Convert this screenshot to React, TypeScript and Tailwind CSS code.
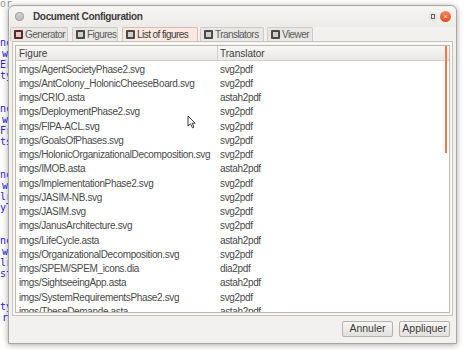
import React from 'react';

const rows: [string, string][] = [
  ['imgs/AgentSocietyPhase2.svg', 'svg2pdf'],
  ['imgs/AntColony_HolonicCheeseBoard.svg', 'svg2pdf'],
  ['imgs/CRIO.asta', 'astah2pdf'],
  ['imgs/DeploymentPhase2.svg', 'svg2pdf'],
  ['imgs/FIPA-ACL.svg', 'svg2pdf'],
  ['imgs/GoalsOfPhases.svg', 'svg2pdf'],
  ['imgs/HolonicOrganizationalDecomposition.svg', 'svg2pdf'],
  ['imgs/IMOB.asta', 'astah2pdf'],
  ['imgs/ImplementationPhase2.svg', 'svg2pdf'],
  ['imgs/JASIM-NB.svg', 'svg2pdf'],
  ['imgs/JASIM.svg', 'svg2pdf'],
  ['imgs/JanusArchitecture.svg', 'svg2pdf'],
  ['imgs/LifeCycle.asta', 'astah2pdf'],
  ['imgs/OrganizationalDecomposition.svg', 'svg2pdf'],
  ['imgs/SPEM/SPEM_icons.dia', 'dia2pdf'],
  ['imgs/SightseeingApp.asta', 'astah2pdf'],
  ['imgs/SystemRequirementsPhase2.svg', 'svg2pdf'],
  ['imgs/TheseDemande.asta', 'astah2pdf'],
];

const codeBits = [
  ['nc', 'w', 'Er', 'ty'],
  ['nc', 'w', 'Fr', 'ts'],
  ['nc', 'w', 'lr', 'yT'],
  ['nc', 'w', 'lr', 'st'],
  ['ty', 'rr'],
];

const TabIcon = ({ red }: { red?: boolean }) => (
  <span
    className={`mr-[2px] inline-flex h-[9px] w-[9px] shrink-0 items-center justify-center rounded-[1px] ${
      red ? 'bg-[#5b2b28]' : 'bg-[#4a4a48]'
    }`}
  >
    <span className={`h-[5px] w-[5px] ${red ? 'bg-[#e6c9c2]' : 'bg-[#cfcfcc]'}`} />
  </span>
);

const tabs = [
  { label: 'Generator', cls: 'w-[58px] mr-[4px]', red: true },
  { label: 'Figures', cls: 'w-[46px] mr-[4px]' },
  { label: 'List of figures', cls: 'w-[76px] mr-[2px]', active: true },
  { label: 'Translators', cls: 'w-[64px] mr-[3px]' },
  { label: 'Viewer', cls: 'w-[46px]' },
];

export default function App() {
  return (
    <div
      className="relative h-[350px] w-[465px] overflow-hidden bg-white"
      style={{ fontFamily: '"Liberation Sans", Arial, sans-serif' }}
    >
      {/* editor text behind the dialog */}
      <div className="text-[10px] leading-[11px]" style={{ fontFamily: '"DejaVu Sans Mono", monospace' }}>
        <div className="-mt-[2px] text-[#8a8a8a]">or</div>
        <div className="h-[28px]" />
        {codeBits.map((group, i) => (
          <div key={i} className="mb-[22px] text-[#1d23e0]">
            {group.map((t, j) => (
              <div key={j} className={j === 1 ? 'pl-[2px]' : ''}>{t}</div>
            ))}
          </div>
        ))}
      </div>

      {/* dialog window */}
      <div className="absolute left-[8px] top-[5px] flex h-[339px] w-[449px] flex-col rounded-t-[6px] border border-[#a9a6a1] bg-[#f2f1f0] shadow-[0_1px_6px_rgba(0,0,0,0.35)]">
        {/* title bar */}
        <div className="flex h-[21px] items-center rounded-t-[6px] bg-gradient-to-b from-[#f7f6f5] to-[#edebe9] pl-[6px] pr-[5px]">
          <span className="h-[9px] w-[9px] rounded-full bg-gradient-to-b from-[#d6d4d0] to-[#b9b6b1] shadow-[inset_0_0_0_1px_#aaa7a2]" />
          <span className="ml-[9px] whitespace-nowrap text-[10px] font-bold tracking-[-0.35px] text-[#3c3c3c]">
            Document Configuration
          </span>
          <div className="ml-auto flex items-center gap-[2px]">
            <span className="flex h-[10px] w-[10px] items-center justify-center rounded-full bg-[#e8e6e3]">
              <span className="h-[5px] w-[4px] border border-[#6a6864]" />
            </span>
            <span className="flex h-[11px] w-[11px] items-center justify-center rounded-full bg-gradient-to-b from-[#f48a5a] to-[#df4a1c] text-[8px] leading-none text-[#fbe0d3]">
              ×
            </span>
          </div>
        </div>

        {/* tabs */}
        <div className="flex h-[14px] items-end pl-[1px]">
          {tabs.map((t) => (
            <div
              key={t.label}
              className={`flex h-[14px] shrink-0 items-center overflow-hidden whitespace-nowrap rounded-t-[2px] border border-b-0 pl-[3px] text-[10px] leading-none ${t.cls} ${
                t.active
                  ? 'border-[#d9bcb2] bg-[#fbe8e1] text-[#3c3c3c]'
                  : 'border-[#cfccc7] bg-[#e9e7e4] text-[#5c5c5c]'
              }`}
            >
              <TabIcon red={t.red} />
              <span className="tracking-[-0.55px]">{t.label}</span>
            </div>
          ))}
        </div>

        {/* notebook page */}
        <div className="mx-[3px] flex h-[275px] flex-col border border-[#c6c3be] bg-[#f7f7f6] px-[2px] pt-[3px] pb-[2px]">
          <div className="relative flex flex-1 flex-col overflow-hidden border border-[#bcb9b4] bg-white">
            <div className="flex h-[15px] border-b border-[#d3d0cc] bg-gradient-to-b from-[#f8f7f6] to-[#e9e8e6] text-[10px] leading-[15px] text-[#3c3c3c]">
              <div className="w-[202px] border-r border-[#d3d0cc] pl-[3px]">Figure</div>
              <div className="pl-[2px]">Translator</div>
            </div>
            <div className="pt-[1px]">
              {rows.map(([fig, tr]) => (
                <div key={fig} className="flex h-[14.25px] items-center text-[10px] tracking-[-0.35px] text-[#4a4a4a]">
                  <div className="w-[203px] shrink-0 whitespace-nowrap pl-[3px]">{fig}</div>
                  <div className="pl-[1px]">{tr}</div>
                </div>
              ))}
            </div>
            <div className="absolute right-[2px] top-[0px] h-[107px] w-[2px] bg-[#f07746]" />
          </div>
        </div>

        {/* buttons */}
        <div className="flex flex-1 items-center justify-end gap-[6px] pr-[6px] pb-[2px]">
          <button className="h-[16px] w-[51px] rounded-[2px] border border-[#b5b2ad] bg-gradient-to-b from-[#f8f7f6] to-[#e2e0dd] text-[10.5px] leading-none text-[#3c3c3c]">
            Annuler
          </button>
          <button className="h-[16px] w-[51px] rounded-[2px] border border-[#b5b2ad] bg-gradient-to-b from-[#f8f7f6] to-[#e2e0dd] text-[10.5px] leading-none text-[#3c3c3c]">
            Appliquer
          </button>
        </div>
      </div>

      {/* mouse cursor */}
      <svg className="absolute left-[187px] top-[115px]" width="9" height="14" viewBox="0 0 9 14">
        <path d="M1 1 L1 11 L3.5 8.8 L5.5 12.8 L7 12 L5.2 8.3 L8.2 8.1 Z" fill="#fff" stroke="#222" strokeWidth="0.9" />
      </svg>
    </div>
  );
}
